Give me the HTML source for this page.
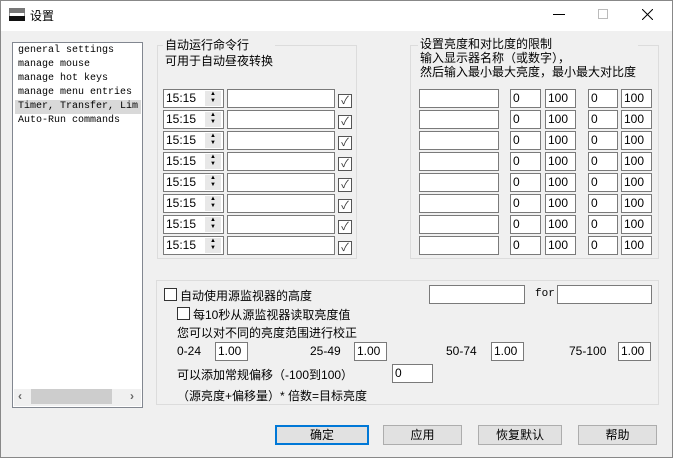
<!DOCTYPE html><html><head><meta charset="utf-8"><style>
*{box-sizing:border-box;margin:0;padding:0}
body{width:673px;height:458px;background:#f0f0f0;font-family:"Liberation Sans","Noto Sans CJK SC",sans-serif;font-size:12px;color:#000;position:relative;overflow:hidden}
.a{position:absolute;white-space:nowrap}
.in{position:absolute;background:#fff;border:1px solid #7a7a7a;height:19px;font-size:12px;line-height:17px;padding-left:2px}
.cb{position:absolute;width:13px;height:13px;border:1px solid #333;background:#fff}
.grp{position:absolute;border:1px solid #dcdcdc}
.btn{position:absolute;height:20px;border:1px solid #adadad;background:#e1e1e1;text-align:center;line-height:18px;font-size:12px}
.mono{font-family:"Liberation Mono",monospace;font-size:10px}
</style></head><body>
<div class="a" style="left:0;top:0;width:673px;height:458px;border:1px solid #888"></div>
<div class="a" style="left:1px;top:1px;width:671px;height:30px;background:#fff"></div>
<div class="a" style="left:9px;top:8px;width:16px;height:5px;background:#777"></div>
<div class="a" style="left:9px;top:13px;width:16px;height:3px;background:#fff;border:1px solid #999;border-width:0 1px"></div>
<div class="a" style="left:9px;top:16px;width:16px;height:5px;background:#111"></div>
<div class="a" style="left:30px;top:7px;font-size:12px">设置</div>
<div class="a" style="left:553px;top:14px;width:12px;height:1px;background:#000"></div>
<div class="a" style="left:598px;top:9px;width:10px;height:10px;border:1px solid #bbb"></div>
<svg class="a" style="left:642px;top:9px" width="11" height="11"><path d="M0 0L11 11M11 0L0 11" stroke="#000" stroke-width="1"/></svg>

<div class="a" style="left:12px;top:42px;width:131px;height:366px;background:#fff;border:1px solid #828790"></div>
<div class="a mono" style="left:18px;top:44px;line-height:14px">general settings<br>manage mouse<br>manage hot keys<br>manage menu entries</div>
<div class="a" style="left:15px;top:100px;width:126px;height:14px;background:#d9d9d9"></div>
<div class="a mono" style="left:18px;top:100px;line-height:14px;width:122px;overflow:hidden">Timer, Transfer, Lim:<br>Auto-Run commands</div>
<div class="a" style="left:14px;top:389px;width:127px;height:17px;background:#f0f0f0"></div>
<div class="a" style="left:31px;top:389px;width:81px;height:15px;background:#cdcdcd"></div>
<div class="a" style="left:18px;top:389px;color:#666;font-weight:bold">‹</div>
<div class="a" style="left:130px;top:389px;color:#666;font-weight:bold">›</div>

<div class="grp" style="left:157px;top:45px;width:200px;height:214px"></div>
<div class="a" style="left:163px;top:37px;background:#f0f0f0;padding:0 2px;line-height:16px">自动运行命令行<br>可用于自动昼夜转换</div>
<div class="grp" style="left:410px;top:45px;width:249px;height:214px"></div>
<div class="a" style="left:418px;top:37px;background:#f0f0f0;padding:0 2px;line-height:14px">设置亮度和对比度的限制<br>输入显示器名称（或数字），<br>然后输入最小最大亮度，最小最大对比度</div>

<div id="rows"></div>
<div class="grp" style="left:156px;top:280px;width:503px;height:125px"></div>
<div class="cb" style="left:164px;top:288px"></div>
<div class="a" style="left:180px;top:287px">自动使用源监视器的高度</div>
<div class="in" style="left:429px;top:285px;width:96px"></div>
<div class="a mono" style="left:535px;top:288px;font-size:11px">for</div>
<div class="in" style="left:557px;top:285px;width:95px"></div>
<div class="cb" style="left:177px;top:307px"></div>
<div class="a" style="left:193px;top:306px">每10秒从源监视器读取亮度值</div>
<div class="a" style="left:177px;top:324px">您可以对不同的亮度范围进行校正</div>
<div class="a" style="left:177px;top:344px">0-24</div><div class="in" style="left:215px;top:342px;width:33px">1.00</div>
<div class="a" style="left:310px;top:344px">25-49</div><div class="in" style="left:354px;top:342px;width:33px">1.00</div>
<div class="a" style="left:446px;top:344px">50-74</div><div class="in" style="left:491px;top:342px;width:33px">1.00</div>
<div class="a" style="left:569px;top:344px">75-100</div><div class="in" style="left:618px;top:342px;width:33px">1.00</div>
<div class="a" style="left:177px;top:366px">可以添加常规偏移（-100到100）</div>
<div class="in" style="left:392px;top:364px;width:41px">0</div>
<div class="a" style="left:177px;top:387px">（源亮度+偏移量）* 倍数=目标亮度</div>

<div class="btn" style="left:275px;top:425px;width:94px;border:2px solid #0078d7;line-height:16px">确定</div>
<div class="btn" style="left:383px;top:425px;width:79px">应用</div>
<div class="btn" style="left:478px;top:425px;width:84px">恢复默认</div>
<div class="btn" style="left:578px;top:425px;width:79px">帮助</div>
<script>
var h='';for(var i=0;i<8;i++){var y=89+i*21;
h+='<div class="in" style="left:163px;top:'+y+'px;width:61px">15:15</div>';
h+='<div class="a" style="left:205px;top:'+(y+2)+'px;width:16px;height:15px;background:#e8e8e8;font-size:6px;line-height:7px;text-align:center">▲<br>▼</div>';
h+='<div class="in" style="left:227px;top:'+y+'px;width:108px"></div>';
h+='<div class="a" style="left:338px;top:'+(y+5)+'px;width:14px;height:14px;border:1px solid #555;background:#fff;font-size:11px;line-height:12px;text-align:center;color:#333">✓</div>';
h+='<div class="in" style="left:419px;top:'+y+'px;width:80px"></div>';
h+='<div class="in" style="left:510px;top:'+y+'px;width:31px">0</div>';
h+='<div class="in" style="left:545px;top:'+y+'px;width:31px">100</div>';
h+='<div class="in" style="left:588px;top:'+y+'px;width:30px">0</div>';
h+='<div class="in" style="left:621px;top:'+y+'px;width:31px">100</div>';}
document.getElementById('rows').innerHTML=h;
</script>
</body></html>
